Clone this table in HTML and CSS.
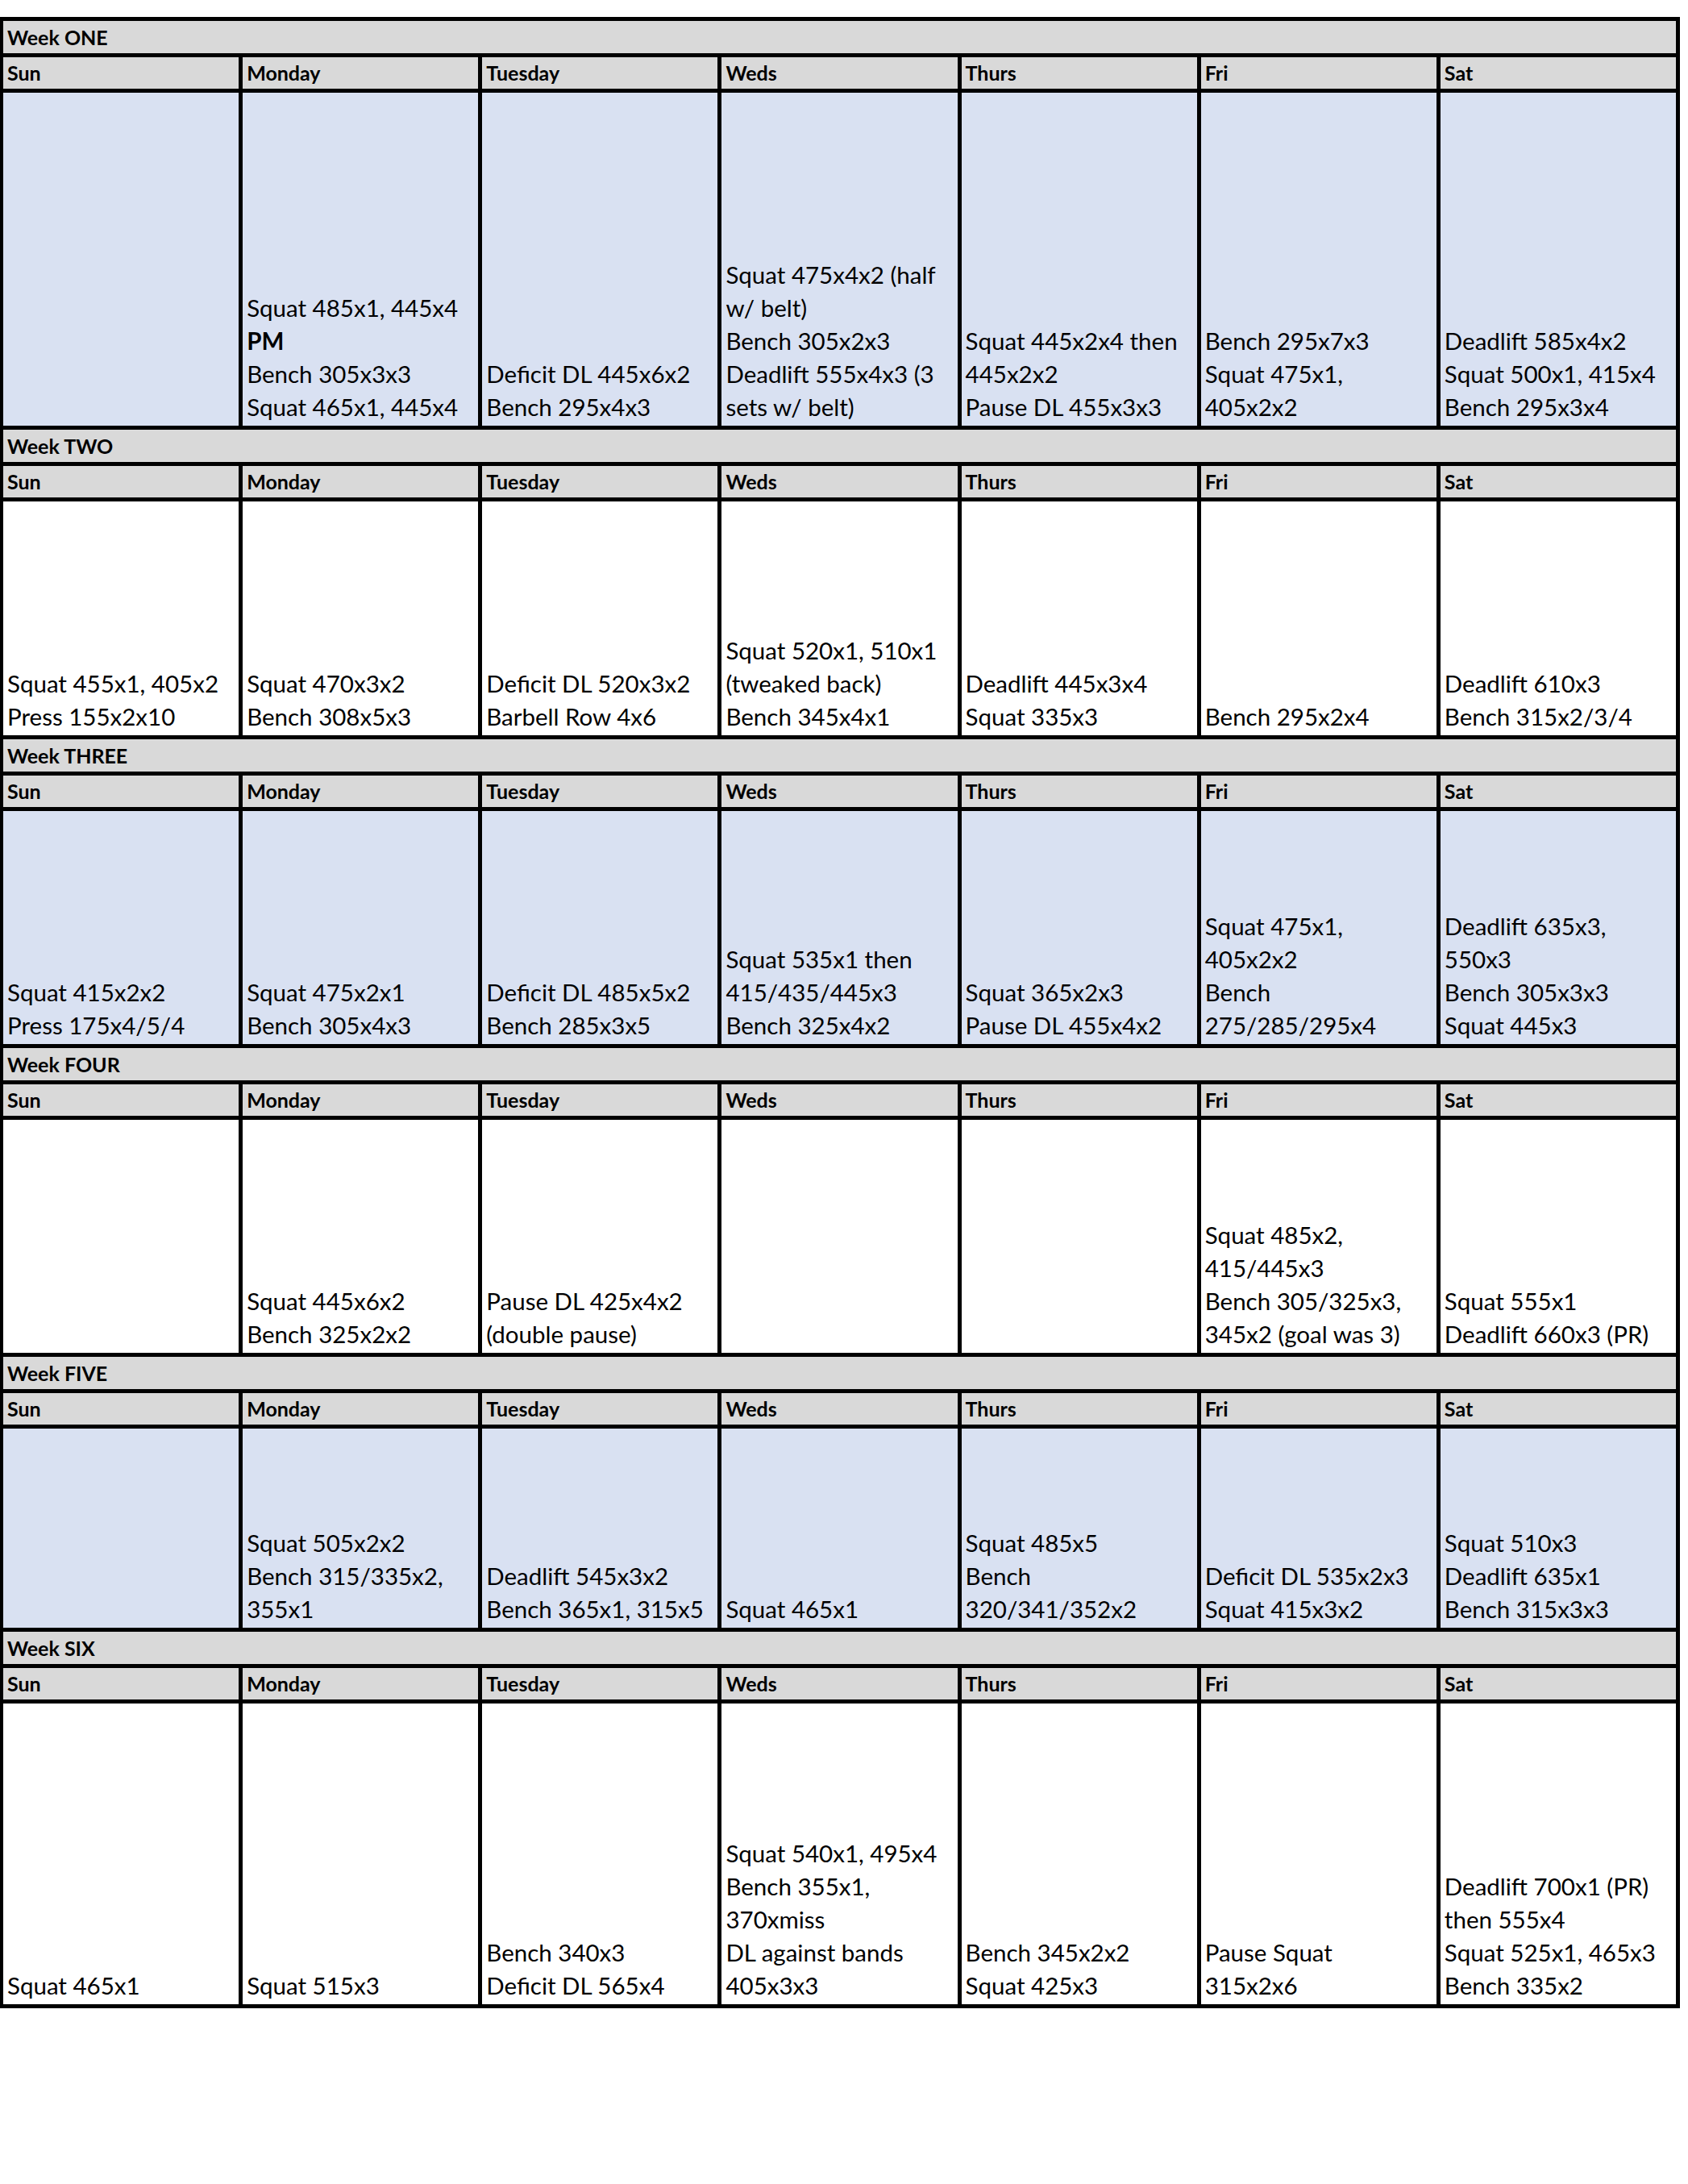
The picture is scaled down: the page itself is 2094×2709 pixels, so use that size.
FILE: index.html
```html
<!DOCTYPE html>
<html lang="en">
<head>
<meta charset="utf-8">
<title>Training Log</title>
<link rel="stylesheet" href="styles.css">
</head>
<body>
<div class="sheet">
  <div class="week-title">Week ONE</div>
  <div class="day">Sun</div><div class="day">Monday</div><div class="day">Tuesday</div><div class="day">Weds</div><div class="day">Thurs</div><div class="day">Fri</div><div class="day">Sat</div>
  <div class="cell blue"></div>
  <div class="cell blue"><p>Squat 485x1, 445x4<br><b>PM</b><br>Bench 305x3x3<br>Squat 465x1, 445x4</p></div>
  <div class="cell blue"><p>Deficit DL 445x6x2<br>Bench 295x4x3</p></div>
  <div class="cell blue"><p>Squat 475x4x2 (half<br>w/ belt)<br>Bench 305x2x3<br>Deadlift 555x4x3 (3<br>sets w/ belt)</p></div>
  <div class="cell blue"><p>Squat 445x2x4 then<br>445x2x2<br>Pause DL 455x3x3</p></div>
  <div class="cell blue"><p>Bench 295x7x3<br>Squat 475x1,<br>405x2x2</p></div>
  <div class="cell blue"><p>Deadlift 585x4x2<br>Squat 500x1, 415x4<br>Bench 295x3x4</p></div>

  <div class="week-title">Week TWO</div>
  <div class="day">Sun</div><div class="day">Monday</div><div class="day">Tuesday</div><div class="day">Weds</div><div class="day">Thurs</div><div class="day">Fri</div><div class="day">Sat</div>
  <div class="cell"><p>Squat 455x1, 405x2<br>Press 155x2x10</p></div>
  <div class="cell"><p>Squat 470x3x2<br>Bench 308x5x3</p></div>
  <div class="cell"><p>Deficit DL 520x3x2<br>Barbell Row 4x6</p></div>
  <div class="cell"><p>Squat 520x1, 510x1<br>(tweaked back)<br>Bench 345x4x1</p></div>
  <div class="cell"><p>Deadlift 445x3x4<br>Squat 335x3</p></div>
  <div class="cell"><p>Bench 295x2x4</p></div>
  <div class="cell"><p>Deadlift 610x3<br>Bench 315x2/3/4</p></div>

  <div class="week-title">Week THREE</div>
  <div class="day">Sun</div><div class="day">Monday</div><div class="day">Tuesday</div><div class="day">Weds</div><div class="day">Thurs</div><div class="day">Fri</div><div class="day">Sat</div>
  <div class="cell blue"><p>Squat 415x2x2<br>Press 175x4/5/4</p></div>
  <div class="cell blue"><p>Squat 475x2x1<br>Bench 305x4x3</p></div>
  <div class="cell blue"><p>Deficit DL 485x5x2<br>Bench 285x3x5</p></div>
  <div class="cell blue"><p>Squat 535x1 then<br>415/435/445x3<br>Bench 325x4x2</p></div>
  <div class="cell blue"><p>Squat 365x2x3<br>Pause DL 455x4x2</p></div>
  <div class="cell blue"><p>Squat 475x1,<br>405x2x2<br>Bench<br>275/285/295x4</p></div>
  <div class="cell blue"><p>Deadlift 635x3,<br>550x3<br>Bench 305x3x3<br>Squat 445x3</p></div>

  <div class="week-title">Week FOUR</div>
  <div class="day">Sun</div><div class="day">Monday</div><div class="day">Tuesday</div><div class="day">Weds</div><div class="day">Thurs</div><div class="day">Fri</div><div class="day">Sat</div>
  <div class="cell"></div>
  <div class="cell"><p>Squat 445x6x2<br>Bench 325x2x2</p></div>
  <div class="cell"><p>Pause DL 425x4x2<br>(double pause)</p></div>
  <div class="cell"></div>
  <div class="cell"></div>
  <div class="cell"><p>Squat 485x2,<br>415/445x3<br>Bench 305/325x3,<br>345x2 (goal was 3)</p></div>
  <div class="cell"><p>Squat 555x1<br>Deadlift 660x3 (PR)</p></div>

  <div class="week-title">Week FIVE</div>
  <div class="day">Sun</div><div class="day">Monday</div><div class="day">Tuesday</div><div class="day">Weds</div><div class="day">Thurs</div><div class="day">Fri</div><div class="day">Sat</div>
  <div class="cell blue"></div>
  <div class="cell blue"><p>Squat 505x2x2<br>Bench 315/335x2,<br>355x1</p></div>
  <div class="cell blue"><p>Deadlift 545x3x2<br>Bench 365x1, 315x5</p></div>
  <div class="cell blue"><p>Squat 465x1</p></div>
  <div class="cell blue"><p>Squat 485x5<br>Bench<br>320/341/352x2</p></div>
  <div class="cell blue"><p>Deficit DL 535x2x3<br>Squat 415x3x2</p></div>
  <div class="cell blue"><p>Squat 510x3<br>Deadlift 635x1<br>Bench 315x3x3</p></div>

  <div class="week-title">Week SIX</div>
  <div class="day">Sun</div><div class="day">Monday</div><div class="day">Tuesday</div><div class="day">Weds</div><div class="day">Thurs</div><div class="day">Fri</div><div class="day">Sat</div>
  <div class="cell"><p>Squat 465x1</p></div>
  <div class="cell"><p>Squat 515x3</p></div>
  <div class="cell"><p>Bench 340x3<br>Deficit DL 565x4</p></div>
  <div class="cell"><p>Squat 540x1, 495x4<br>Bench 355x1,<br>370xmiss<br>DL against bands<br>405x3x3</p></div>
  <div class="cell"><p>Bench 345x2x2<br>Squat 425x3</p></div>
  <div class="cell"><p>Pause Squat<br>315x2x6</p></div>
  <div class="cell"><p>Deadlift 700x1 (PR)<br>then 555x4<br>Squat 525x1, 465x3<br>Bench 335x2</p></div>
</div>
</body>
</html>
```

FILE: styles.css
```css
html, body {
  margin: 0;
  padding: 0;
  background: #ffffff;
}

body {
  font-family: Lato, "Open Sans", sans-serif;
  color: #000000;
}

.sheet {
  width: 2084px;
  box-sizing: border-box;
  margin-top: 21px;
  padding: 5px 5px 5px 4px;
  background: #000000;
  display: grid;
  grid-template-columns: repeat(7, 1fr);
  grid-template-rows:
    40px 39px 413px
    40px 39px 290px
    40px 39px 289px
    40px 39px 289px
    40px 39px 247px
    40px 39px 373px;
  gap: 5px;
}

.week-title {
  grid-column: 1 / -1;
  background: #d9d9d9;
  font-weight: 700;
  font-size: 25px;
  line-height: 40px;
  padding-left: 5px;
  white-space: nowrap;
}

.day {
  background: #d9d9d9;
  font-weight: 700;
  font-size: 25px;
  line-height: 39px;
  padding-left: 5px;
  white-space: nowrap;
}

.cell {
  background: #ffffff;
  display: flex;
  flex-direction: column;
  justify-content: flex-end;
  padding: 0 0 3px 5px;
  overflow: hidden;
  min-width: 0;
}

.cell.blue {
  background: #d9e1f2;
}

.cell p {
  margin: 0;
  font-size: 29.5px;
  line-height: 41px;
  white-space: nowrap;
}

.cell b {
  font-weight: 700;
}
```
